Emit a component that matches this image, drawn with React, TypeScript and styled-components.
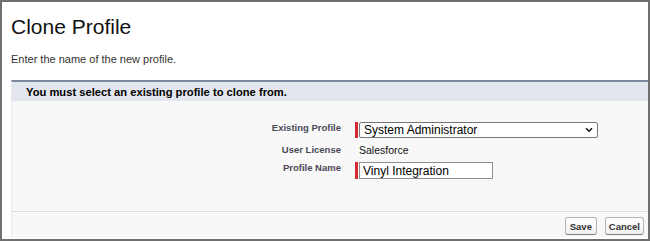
import styled, { createGlobalStyle } from 'styled-components';

const GlobalStyle = createGlobalStyle`
  html, body {
    margin: 0;
    padding: 0;
    background: #ffffff;
  }
  body {
    font-family: "Liberation Sans", Arial, sans-serif;
  }
`;

const Frame = styled.div`
  box-sizing: border-box;
  width: 650px;
  height: 241px;
  border: 2px solid #707070;
  background: #ffffff;
  padding: 13px 0 0 9px;
  overflow: hidden;
`;

const Title = styled.h1`
  margin: 0;
  font-size: 21px;
  line-height: 24px;
  font-weight: 400;
  color: #111;
`;

const Subtitle = styled.p`
  margin: 14px 0 0;
  font-size: 11px;
  line-height: 13px;
  color: #333;
`;

const Panel = styled.section`
  margin-top: 14px;
  border-top: 2px solid #7d88a1;
  border-left: 1px solid #ebebeb;
  background: #f8f8f8;
`;

const PanelHeader = styled.div`
  height: 19px;
  display: flex;
  align-items: center;
  padding-left: 14px;
  background: #e3e6ee;
  font-size: 11.2px;
  font-weight: 700;
  color: #000;
`;

const Form = styled.div`
  display: grid;
  grid-template-columns: 329px 1fr;
  column-gap: 14px;
  row-gap: 2px;
  padding: 21px 0 32px;
`;

const Label = styled.div<{ $pad?: number }>`
  text-align: right;
  padding-top: ${({ $pad }) => $pad ?? 0}px;
  font-size: 9.5px;
  line-height: 12px;
  font-weight: 700;
  color: #4a4a56;
`;

const Field = styled.div<{ $h?: number }>`
  display: flex;
  align-items: center;
  min-height: ${({ $h }) => $h ?? 16}px;
`;

const Required = styled.span`
  width: 3px;
  align-self: stretch;
  background: #d42a2f;
  margin-right: 1px;
`;

const SelectBox = styled.div`
  box-sizing: border-box;
  width: 239px;
  height: 16px;
  display: flex;
  align-items: center;
  justify-content: space-between;
  padding: 0 4px 0 4px;
  border: 1px solid #767676;
  border-radius: 2px;
  background: #fff;
  font-size: 12px;
  color: #000;
`;

const TextInput = styled.div`
  box-sizing: border-box;
  width: 134px;
  height: 17px;
  display: flex;
  align-items: center;
  padding-left: 3px;
  border: 1px solid #8f8f8f;
  background: #fff;
  font-size: 12px;
  color: #000;
`;

const Value = styled.span`
  padding-left: 4px;
  font-size: 10.5px;
  color: #111;
`;

const ButtonBar = styled.div`
  display: flex;
  justify-content: flex-end;
  gap: 8px;
  padding: 5px 4px 0 0;
  height: 26px;
  box-sizing: border-box;
  border-top: 1px solid #dcdcdc;
`;

const Button = styled.button`
  box-sizing: border-box;
  height: 18px;
  min-width: 32px;
  padding: 0 3px;
  border: 1px solid #b5b5b5;
  border-bottom-color: #7f7f7f;
  border-radius: 3px;
  background: linear-gradient(#ffffff, #f1f1f1);
  font-family: "Liberation Sans", Arial, sans-serif;
  font-size: 9.5px;
  font-weight: 700;
  color: #333;
`;

const Chevron = () => (
  <svg width="8" height="6" viewBox="0 0 8 6">
    <path d="M1 1.2 L4 4.2 L7 1.2" fill="none" stroke="#111" strokeWidth="1.5" />
  </svg>
);

export default function App() {
  return (
    <>
      <GlobalStyle />
      <Frame>
        <Title>Clone Profile</Title>
        <Subtitle>Enter the name of the new profile.</Subtitle>
        <Panel>
          <PanelHeader>You must select an existing profile to clone from.</PanelHeader>
          <Form>
            <Label>Existing Profile</Label>
            <Field>
              <Required />
              <SelectBox>
                <span>System Administrator</span>
                <Chevron />
              </SelectBox>
            </Field>
            <Label $pad={4}>User License</Label>
            <Field $h={20}>
              <Value>Salesforce</Value>
            </Field>
            <Label>Profile Name</Label>
            <Field>
              <Required />
              <TextInput>Vinyl Integration</TextInput>
            </Field>
          </Form>
          <ButtonBar>
            <Button>Save</Button>
            <Button>Cancel</Button>
          </ButtonBar>
        </Panel>
      </Frame>
    </>
  );
}
